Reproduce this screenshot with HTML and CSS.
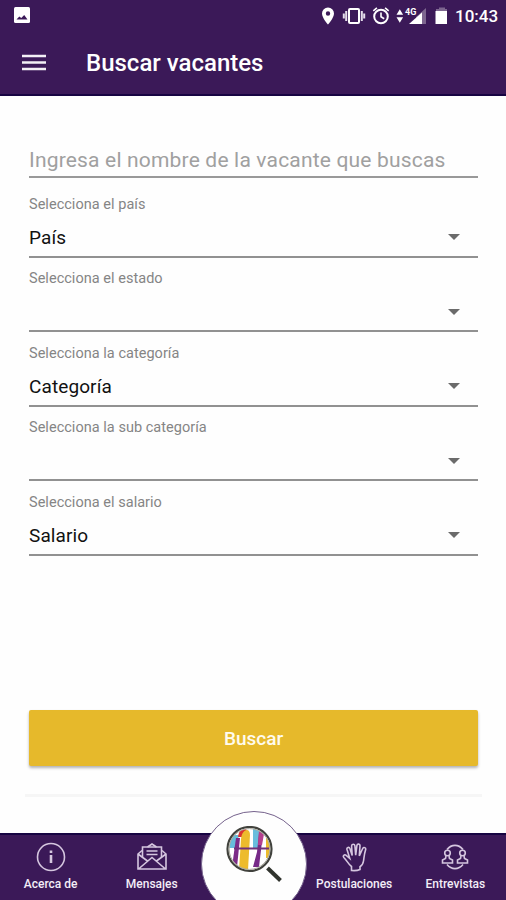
FILE: index.html
```html
<!DOCTYPE html>
<html lang="es">
<head>
    <meta charset="utf-8">
    <title>Buscar vacantes</title>
    <link rel="stylesheet" href="styles.css">
</head>
<body>
    <header class="header">
        <div class="status-bar">
            <svg class="status-image" width="16" height="16" viewBox="0 0 16 16">
                <rect width="16" height="16" rx="1.5" fill="#fff"/>
                <path d="M2.500 12.500l2.800-3 2 1.500 2.900-3 3.300 4.500z" fill="#3b1958"/>
            </svg>
            <svg class="status-icons" width="126" height="20" viewBox="0 0 126 20">
                <!-- location -->
                <path d="M7 1.500a6 6 0 0 0-6 6c0 4.500 6 11 6 11s6-6.500 6-11a6 6 0 0 0-6-6zm0 3.800a2.200 2.200 0 1 1 0 4.400 2.200 2.200 0 0 1 0-4.400z" fill="#fff" fill-rule="evenodd"/>
                <!-- vibrate -->
                <rect x="28" y="3" width="10" height="14" rx="1" fill="none" stroke="#fff" stroke-width="2"/>
                <path d="M25.200 5v10M40.800 5v10M22.800 7.500v5M43.200 7.500v5" stroke="#e6dfec" stroke-width="2"/>
                <!-- alarm -->
                <circle cx="60" cy="10.500" r="6.800" fill="none" stroke="#fff" stroke-width="2"/>
                <path d="M60 6.500v4.300l3.200 2M52.300 4.800l3.600-3M67.700 4.800l-3.600-3" fill="none" stroke="#fff" stroke-width="1.600"/>
                <!-- mobile signal -->
                <path d="M75.500 8.800l3.300-5.500 3.300 5.500zM75.500 11.200l3.300 5.500 3.300-5.500z" fill="#fff"/>
                <path d="M105 2v16H95V11z" fill="#7d668f"/>
                <path d="M88 18L101 6.500V18z" fill="#fff"/>
                <text x="84" y="8.500" class="signal-type">4G</text>
                <!-- battery -->
                <path d="M118 1.500h6V3h2v2h-11V3h3z" fill="#7d668f"/>
                <path d="M114.500 5H126v13h-11.500z" fill="#fff"/>
            </svg>
            <span class="clock">10:43</span>
        </div>
        <div class="toolbar">
            <svg class="menu-icon" width="24" height="17" viewBox="0 0 24 17">
                <path d="M0 2h24M0 8.500h24M0 15h24" stroke="#f3eff6" stroke-width="2.600"/>
            </svg>
            <h1 class="title">Buscar vacantes</h1>
        </div>
    </header>

    <main class="content">
        <div class="search">Ingresa el nombre de la vacante que buscas</div>

        <div class="field">
            <span class="label">Selecciona el país</span>
            <div class="select">País</div>
        </div>
        <div class="field">
            <span class="label">Selecciona el estado</span>
            <div class="select"></div>
        </div>
        <div class="field">
            <span class="label">Selecciona la categoría</span>
            <div class="select">Categoría</div>
        </div>
        <div class="field">
            <span class="label">Selecciona la sub categoría</span>
            <div class="select"></div>
        </div>
        <div class="field">
            <span class="label">Selecciona el salario</span>
            <div class="select">Salario</div>
        </div>

        <button class="submit">Buscar</button>
        <div class="divider"></div>
    </main>

    <nav class="tabs">
        <a class="tab">
            <svg width="30" height="30" viewBox="0 0 30 30">
                <circle cx="15" cy="15" r="13.500"/>
                <path d="M15 13v8" stroke-width="2.600"/>
                <path d="M15 8.500v2.500" stroke-width="2.600"/>
            </svg>
            <span>Acerca de</span>
        </a>
        <a class="tab">
            <svg width="30" height="30" viewBox="0 0 30 30">
                <path d="M5 8.500L1 12v15h28V12l-4-3.500M10.500 5L15 2l4.500 3M1 12l9.500 7M29 12l-9.500 7M1.500 27L15 15.500 28.500 27"/>
                <path d="M5.500 15V5h19v10M9.500 9h11M9.500 12.500h11"/>
            </svg>
            <span>Mensajes</span>
        </a>
        <span class="tab-gap"></span>
        <a class="tab">
            <svg width="26" height="30" viewBox="0 0 26 30">
                <path d="M10.500 27.500v-3C7 22 6 18.500 2.800 15.500c-1.500-1.700.7-3.500 2.400-2.200l3.500 3L6 7.500c-.6-2.300 2.200-2.900 2.900-.9l2.300 7L10.600 4c0-2.300 3-2.400 3.300-.1l.8 9.200 1.200-9.600c.4-2.100 3.300-1.800 3.100.4l-.7 10 3.400-7.400c1-1.900 3.500-.8 2.900 1.200-1.500 4.700-1.500 7.500-2.100 11.300-.4 2.800-1.500 4.500-3.500 5.700v2.800c-2.800 1.300-5.600 1.300-8.500 1z"/>
            </svg>
            <span>Postulaciones</span>
        </a>
        <a class="tab">
            <svg width="30" height="30" viewBox="0 0 30 30">
                <path d="M7 7.500C11.500 2 18.500 2 23 7.500M7 22.500c4.500 5.500 11.500 5.500 16 0"/>
                <circle cx="7.500" cy="11" r="2.800"/>
                <circle cx="22.500" cy="11" r="2.800"/>
                <path d="M6 14l-.5 2.500L2.500 18v3h10v-3l-3-1.500L9 14M21 14l-.5 2.500-3 1.500v3h10v-3l-3-1.500L24 14"/>
            </svg>
            <span>Entrevistas</span>
        </a>
        <div class="search-tab">
            <svg width="58" height="58" viewBox="0 0 58 58">
                <defs>
                    <clipPath id="lens"><circle cx="23.500" cy="23" r="20.500"/></clipPath>
                </defs>
                <circle cx="23.500" cy="23" r="21" fill="#fff"/>
                <g clip-path="url(#lens)">
                    <path d="M5 9h8l-3 13H3z" fill="#67bddb"/>
                    <path d="M10 12h4l-3 29H6z" fill="#7c2b87"/>
                    <path d="M12 11c1-8 6-9 9-7l-5 7z" fill="#d93432"/>
                    <path d="M15 13c1-10 9-12 9-4l-2 35h-9z" fill="#edbb2d"/>
                    <path d="M27 2h7l-2 20h-5z" fill="#68bddd"/>
                    <path d="M33 7h4l-4 34h-6l4-15z" fill="#762a88"/>
                    <path d="M33 4l5 4-2 11h-4z" fill="#b5408e"/>
                    <path d="M40 12h4v20h-4z" fill="#edbb2d"/>
                    <path d="M8 22.500h35" stroke="#713079" stroke-width="1.800"/>
                </g>
                <circle cx="23.500" cy="23" r="22" fill="none" stroke="#41423d" stroke-width="2.200"/>
                <circle cx="23.500" cy="23" r="20.400" fill="none" stroke="#aaa99d" stroke-width="1"/>
                <path d="M41.500 42l13 12.500" stroke="#30332d" stroke-width="4"/>
            </svg>
        </div>
    </nav>
</body>
</html>
```

FILE: styles.css
```css
* {
    box-sizing: border-box;
}

body {
    margin: 0;
    height: 900px;
    display: flex;
    flex-direction: column;
    overflow: hidden;
    background-color: #fefefe;
    font-family: Roboto, sans-serif;
}

.header {
    height: 96px;
    background-color: #3b1958;
    border-bottom: 2px solid #170442;
    color: white;
}

.status-bar {
    height: 31px;
    display: flex;
    align-items: center;
    padding: 0 8px 0 14px;
}

.status-image {
    margin-top: -1px;
}

.status-icons {
    margin-left: auto;
    margin-right: 8px;
}

.signal-type {
    font-size: 9px;
    font-weight: 700;
    fill: white;
}

.clock {
    width: 43px;
    font-size: 17px;
    font-weight: 500;
    white-space: nowrap;
}

.toolbar {
    height: 63px;
    display: flex;
    align-items: center;
    padding-left: 22px;
}

.title {
    margin: 0 0 0 40px;
    padding-top: 1px;
    font-size: 24px;
    font-weight: 500;
}

.content {
    flex: 1;
    display: flex;
    flex-direction: column;
    padding: 45px 28px 0 29px;
}

.search {
    height: 37px;
    line-height: 38px;
    border-bottom: 2px solid #999;
    color: #a0a0a0;
    font-size: 21px;
    letter-spacing: 0.18px;
    white-space: nowrap;
}

.field {
    height: 74.6px;
    padding-top: 12px;
}

.search + .field {
    margin-top: 0.6px;
}

.label {
    display: block;
    height: 28px;
    line-height: 28px;
    color: #858585;
    font-size: 14.5px;
    letter-spacing: 0.03px;
}

.select {
    height: 39px;
    display: flex;
    align-items: center;
    padding-right: 18px;
    border-bottom: 2px solid #919191;
    color: #111;
    font-size: 19px;
    letter-spacing: 0.1px;
}

.select::after {
    content: "";
    margin-left: auto;
    border: 6px solid transparent;
    border-top-color: #6b6b6b;
    border-bottom: 0;
}

.submit {
    height: 56px;
    flex-shrink: 0;
    margin-top: 158.4px;
    padding-top: 3px;
    border: 0;
    border-radius: 2px;
    background-color: #e6b92b;
    box-shadow: 0 2px 3px rgba(0, 0, 0, 0.3);
    color: #fffbef;
    font-family: inherit;
    font-size: 19px;
    font-weight: 500;
}

.divider {
    height: 3px;
    margin: 28px -4px 0;
    background-color: #f6f6f6;
}

.tabs {
    position: relative;
    height: 67px;
    display: grid;
    grid-template-columns: repeat(5, 1fr);
    background-color: #3b1958;
    border-top: 2px solid #170442;
}

.tab {
    display: flex;
    flex-direction: column;
    align-items: center;
    padding-top: 7px;
    color: #f3edf7;
    font-size: 12px;
    font-weight: 500;
}

.tab svg {
    fill: none;
    stroke: #d5c6df;
    stroke-width: 1.6;
}

.tab span {
    margin-top: 5px;
    line-height: 14px;
}

/* round button that rises above the tab bar */
.search-tab {
    position: absolute;
    left: 201px;
    top: -24px;
    width: 106px;
    height: 106px;
    padding: 14px 0 0 24px;
    border: 1px solid #75628c;
    border-radius: 50%;
    background-color: #fefefe;
}
```
